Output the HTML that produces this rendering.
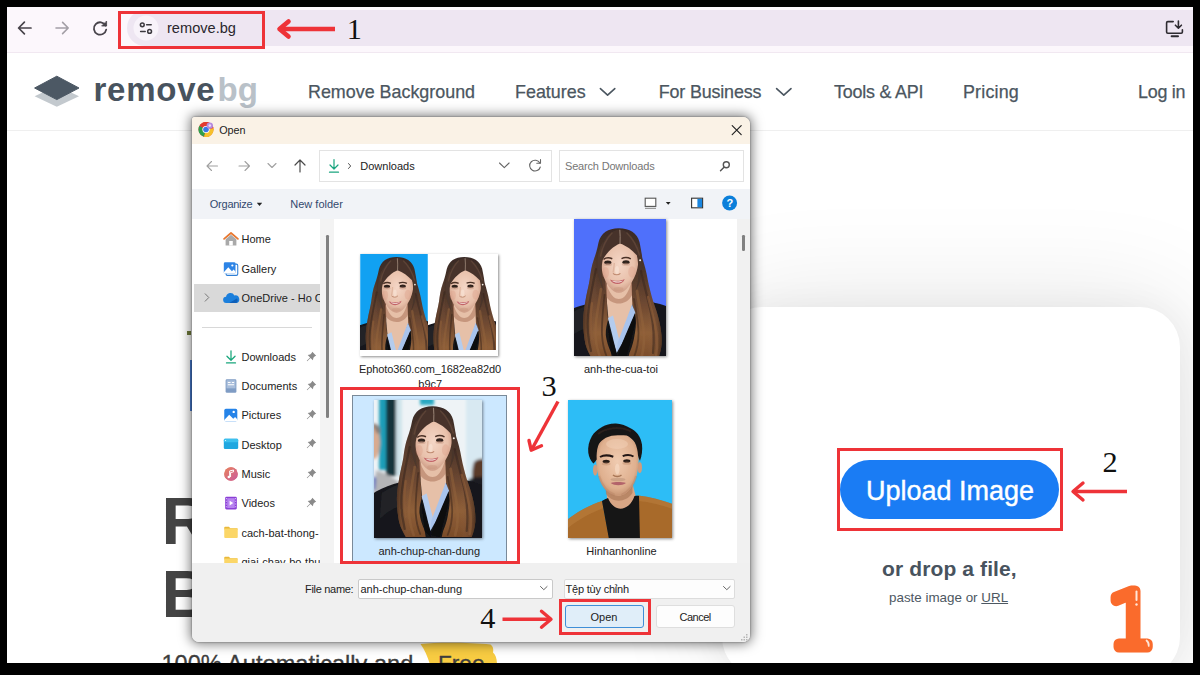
<!DOCTYPE html>
<html lang="en">
<head>
<meta charset="utf-8">
<title>remove.bg – Open file</title>
<style>
*{box-sizing:border-box;margin:0;padding:0}
html,body{width:1200px;height:675px;overflow:hidden;background:#000}
body{font-family:"Liberation Sans",sans-serif;position:relative}
.abs{position:absolute}
.t{position:absolute;white-space:nowrap;line-height:1}
#screen{position:absolute;left:7px;top:6.500px;width:1186px;height:656.500px;background:#fff;overflow:hidden}
/* coordinates inside #screen are offset by -7,-7 ; use wrapper to keep page coords */
#page{position:absolute;left:-7px;top:-6.500px;width:1200px;height:675px}
/* browser bar */
#bbar{left:7px;top:6px;width:1186px;height:46px;background:#fcf7fc}
#omni{left:127px;top:10px;width:1080px;height:36px;background:#eee6f2;border-radius:18px 0 0 18px}
#omni-strip{left:7px;top:46px;width:1186px;height:6px;background:#fcf7fc}
#bline{left:7px;top:52px;width:1186px;height:1px;background:#f1e8f1}
.nav{font-size:17.9px;color:#4b5660;-webkit-text-stroke:.25px #4b5660}
/* site */
#hline{left:7px;top:130px;width:1186px;height:1px;background:#efefef}
/* dialog */
#dlg{left:192px;top:117px;width:558px;height:525px;background:#fff;border-radius:3px 7px 7px 7px;box-shadow:0 0 12px 2px rgba(0,0,0,.5),0 0 2px rgba(0,0,0,.5)}
#dlgin{position:absolute;left:0;top:0;width:558px;height:525px;overflow:hidden;border-radius:3px 7px 7px 7px;font-size:12px;color:#1f1f1f}
#dlgc{position:absolute;left:-192px;top:-117px;width:1200px;height:675px}
.d{position:absolute;white-space:nowrap;line-height:1;font-size:11px;color:#222}
.red{position:absolute;border:3.500px solid #ee3338}
.num{position:absolute;font-family:"Liberation Serif",serif;color:#111;line-height:1;white-space:nowrap}
</style>
</head>
<body>

<svg width="0" height="0" style="position:absolute">
<defs>
  <linearGradient id="hairg" x1="0" y1="0" x2="0" y2="1">
    <stop offset="0" stop-color="#3a2b26"/><stop offset=".3" stop-color="#4a342a"/><stop offset=".55" stop-color="#6a4630"/><stop offset=".8" stop-color="#8f5f38"/><stop offset="1" stop-color="#7a4c2a"/>
  </linearGradient>
  <linearGradient id="hairhl" x1="0" y1="0" x2="1" y2="0">
    <stop offset="0" stop-color="#3a241a" stop-opacity=".7"/><stop offset=".18" stop-color="#9a6a48" stop-opacity=".0"/><stop offset=".82" stop-color="#9a6a48" stop-opacity=".0"/><stop offset="1" stop-color="#3a241a" stop-opacity=".7"/>
  </linearGradient>
  <radialGradient id="skin" cx=".5" cy=".45" r=".6">
    <stop offset="0" stop-color="#f4d6c6"/><stop offset=".65" stop-color="#e8c0aa"/><stop offset="1" stop-color="#c4907a"/>
  </radialGradient>
  <radialGradient id="skinm" cx=".5" cy=".45" r=".62">
    <stop offset="0" stop-color="#f0cbb0"/><stop offset=".7" stop-color="#dfb08f"/><stop offset="1" stop-color="#b98563"/>
  </radialGradient>
  <filter id="bl" x="-5%" y="-5%" width="110%" height="110%"><feGaussianBlur stdDeviation=".7"/></filter>
  <filter id="bl2" x="-10%" y="-10%" width="120%" height="120%"><feGaussianBlur stdDeviation="1.6"/></filter>

  <!-- woman : nominal frame 92 x 137 -->
  <g id="woman" filter="url(#bl)">
    <!-- jacket -->
    <path d="M-30 116C-24 100 -10 92 6 87 16 84 26 82 34 82H58C66 81 76 82 86 85 102 90 114 98 124 114V152H-30z" fill="#15161a"/>
    <path d="M-6 96C0 92 6 89 12 87L10 110C4 112 -2 116 -8 122z" fill="#2a2c33" opacity=".55"/>
    <!-- hair mass -->
    <path d="M44.700 9.300C34 9.300 27 14 24.500 23.500 23 31 21.500 36 20 40 17.500 47 16.500 54 15.700 60.600 14.500 68 12.500 75 11.400 82 10 90 9 97 9.200 103.500 9.400 111 10 118 11.400 125 13 131 15.500 135 18 140H84C86 135 87.200 130 87.600 125 88 118 87 110 85.500 103.500 84 96 81.500 89 79 82 77 75 75 68 73.700 60.600 72.500 53 70.500 46 68.300 39 67.500 33 66.500 28 65.500 23 63 14 56 9.300 44.700 9.300z" fill="url(#hairg)"/>
    <path d="M44.700 9.300C34 9.300 27 14 24.500 23.500 23 31 21.500 36 20 40 17.500 47 16.500 54 15.700 60.600 14.500 68 12.500 75 11.400 82 10 90 9 97 9.200 103.500 9.400 111 10 118 11.400 125 13 131 15.500 135 18 140H84C86 135 87.200 130 87.600 125 88 118 87 110 85.500 103.500 84 96 81.500 89 79 82 77 75 75 68 73.700 60.600 72.500 53 70.500 46 68.300 39 67.500 33 66.500 28 65.500 23 63 14 56 9.300 44.700 9.300z" fill="url(#hairhl)"/>
    <!-- V opening : chest, shirt, inner jacket -->
    <path d="M33.500 78L55.600 78 58.600 86.400C60.500 92 61.900 98 61.900 103.500 61.900 110 60.500 116 59.700 120.700 58.500 126 57 130 55.400 134L54 140H38L37 133.600C34.500 128 32.500 122 31.800 116 31.500 110 33 105 34 101L32.900 82z" fill="#141519"/>
    <path d="M32.500 58H57L58.400 86 44 128 34.500 101 33 84z" fill="#e6c0a8"/>
    <path d="M31 60C35 76 40.500 80 44.800 80 49.500 80 54.500 76 58 60L58 76C53 87 38 87 32.500 78z" fill="#b07a60" opacity=".6"/>
    <path d="M34 99L42.600 134 46 124 39 96.500z" fill="#b4ccee"/>
    <path d="M58 85.500L43.500 124 42.600 134 50 121 61.500 94z" fill="#a8c3ec"/>
    <path d="M33.500 104L37 134 43 140 42.600 134z" fill="#0c0d10"/>
    <path d="M61 94L49 122 43 138 52 140 61.500 104z" fill="#0c0d10"/>
    <!-- face -->
    <path d="M45 21C34 21 27 30 27 42 27.200 52 30 61 35 67.500 38 71.500 41.500 73.800 44.800 73.800 48.200 73.800 51.500 71.500 54.500 67.500 60 61 64 52 64.300 42 64.300 30 56 21 45 21z" fill="url(#skin)"/>
    <!-- hair framing face -->
    <path d="M24.500 46C24.500 24 35 11.500 45.300 10.500 56 11.500 66 24 66 46 65 41 64 38.500 63 36.500 58 31 52 26.500 46 24.600 40 27 33 33 28.800 40.600 27 42 25.500 43.500 24.500 46z" fill="#46332c"/>
    <path d="M28.800 40.600C27.500 46 27.300 54 27.800 60 28.200 64 28.800 68 30 72 25 64 22.500 52 23.500 40 24 34 26 28 29 23 28 29 28 35 28.800 40.600z" fill="#4e382d"/>
    <path d="M63 36.500C64.200 42 64.500 50 64.200 57 64 63 63 67 61.500 72 66.500 64 69 52 68 40 67.500 34 65.500 28 62.500 23 63.500 28 63.500 32 63 36.500z" fill="#4a342b"/>
    <!-- hair texture -->
    <g fill="none" stroke-linecap="round">
      <path d="M22 50C19 64 15.500 80 14 96 13 108 14 120 17 132" stroke="#35241d" stroke-width="2.200" opacity=".55"/>
      <path d="M27 70C25 84 22 98 21.500 110 21 120 23 130 26 138" stroke="#94633c" stroke-width="2.600" opacity=".5"/>
      <path d="M30.500 76C29 90 27.500 104 28 116 28.500 124 30 131 32.500 137" stroke="#3e281e" stroke-width="1.800" opacity=".6"/>
      <path d="M18 84C16.500 96 16 108 18 120" stroke="#8e5e38" stroke-width="2.200" opacity=".6"/>
      <path d="M67 52C70 66 74 80 77 94 79.500 106 80.500 120 79 134" stroke="#35241d" stroke-width="2.200" opacity=".5"/>
      <path d="M63 72C65 86 68 98 69.500 110 70.500 120 70 130 67.500 138" stroke="#94633c" stroke-width="2.800" opacity=".5"/>
      <path d="M60 80C62 92 64.500 104 64.500 114 64.500 124 62.500 132 60 138" stroke="#3e281e" stroke-width="1.800" opacity=".55"/>
      <path d="M74 78C77.500 92 82 106 83 118 83.500 126 83 132 82 137" stroke="#8e5e38" stroke-width="2.400" opacity=".6"/>
      <path d="M38 14C32 20 28.500 28 26.500 37M53 14C59 20 63 27 65.500 36" stroke="#6a4c3c" stroke-width="1.500" opacity=".6"/>
    </g>
    <path d="M45.800 10.800C46.200 15 46.300 20 46 24.600" stroke="#a89080" stroke-width="1" fill="none" opacity=".85"/>
    <!-- features -->
    <path d="M29.500 40.300C32 38.600 35.500 38.600 38.300 39.800M47.500 39.600C50.200 38.400 54 38.400 56.800 39.900" stroke="#4a3026" stroke-width="1.500" fill="none"/>
    <ellipse cx="33.800" cy="43.500" rx="3.600" ry="2" fill="#2e201c"/>
    <ellipse cx="52" cy="43.300" rx="3.600" ry="2" fill="#2e201c"/>
    <ellipse cx="33.800" cy="45.500" rx="4.200" ry="1.500" fill="#c99a84" opacity=".5"/>
    <ellipse cx="52" cy="45.300" rx="4.200" ry="1.500" fill="#c99a84" opacity=".5"/>
    <path d="M39 54.300C40.800 56.300 44.600 56.300 46.400 54.300" stroke="#b98368" stroke-width="1.100" fill="none" opacity=".9"/>
    <path d="M40.300 44C40 48 39.600 51.500 39 53.500" stroke="#d3a48b" stroke-width="1.400" fill="none" opacity=".55"/>
    <ellipse cx="43" cy="51" rx="2" ry="4" fill="#f8e2d4" opacity=".7"/>
    <path d="M35.900 60.500C40 62.300 47 62.300 50.700 60 48.800 66.400 39 66.800 35.900 60.500z" fill="#c26468"/>
    <path d="M38 61.700C41.500 62.800 46 62.800 49 61.400 47 64 40.500 64.200 38 61.700z" fill="#f6ece6"/>
    <ellipse cx="31.500" cy="53.500" rx="3.500" ry="5.500" fill="#d99884" opacity=".32"/>
    <ellipse cx="58" cy="53" rx="3.800" ry="5.800" fill="#d99884" opacity=".32"/>
    <ellipse cx="44.500" cy="70" rx="5" ry="2" fill="#c48f76" opacity=".35"/>
    <circle cx="66.100" cy="41.200" r="1" fill="#f4efe8"/>
  </g>

  <!-- man : nominal frame 104 x 138 -->
  <g id="man" filter="url(#bl)">
    <!-- cardigan -->
    <path d="M-4 123C6 113 20 106 34 101L42 142H70L70 95.500C82 97 94 100 108 105V144H-4z" fill="#a86a2b"/>
    <path d="M-4 123C6 113 20 106 34 101L35.500 108C22 113 8 121 -4 131z" fill="#bb7f3e" opacity=".55"/>
    <path d="M70 95.500C82 97 94 100 108 105V110C94 105 82 102 70 101z" fill="#bb7f3e" opacity=".5"/>
    <path d="M34 101L42 142H46L37.500 101z" fill="#8a5420" opacity=".7"/>
    <path d="M70 95.500L70 142H66.500L67 97z" fill="#8a5420" opacity=".6"/>
    <!-- neck -->
    <path d="M38 84H64.500L68 97C64 118 44 118 39 98z" fill="#d8a685"/>
    <path d="M37.500 86C44 99 58 99 64.500 85V93C58 103 44 103 38 94z" fill="#a97656" opacity=".65"/>
    <!-- t-shirt -->
    <path d="M34 101C36 99.500 38 98.500 40 98 46 113 61 112 66.500 96 68 95.500 69.500 95.500 71 96L72 142H41.500z" fill="#131315"/>
    <!-- ears -->
    <ellipse cx="27.200" cy="70" rx="2.200" ry="5.600" fill="#d29c7c"/>
    <ellipse cx="71.800" cy="67.500" rx="2.200" ry="5.600" fill="#d29c7c"/>
    <!-- face -->
    <path d="M49 33C37 33 28 41 28 56 28 66 29.500 76 33.500 84 37.500 91.500 43.500 95.600 49.800 95.600 56 95.600 62 91 65.800 83.500 69.500 76 70.700 66 70.700 56 70.700 41 61 33 49 33z" fill="url(#skinm)"/>
    <!-- hair -->
    <path d="M25.300 63.500C26.500 62.500 27.800 61 28.700 59.500 28.400 55 28.800 50 30 46.200 31 43 33 41 35.300 39.500 38.500 37 42.500 35.700 46.700 35.500 50.500 35 55 35 58.700 35.500 62 37 64.800 39.500 66.700 42.200 68.800 46 69.800 51 70 55.500 70.500 57.500 71.200 59.500 72 60.800 73.800 56 74.600 50 74 44.800 73 37 68.500 31 62 28 57.500 25.300 52.500 23.700 48 23.500 43 23.300 38 24.500 34 27 29.500 29.500 26 32.500 24 36 21 41 19.700 47 20.300 52.800 20.800 57 22.800 61 25.300 63.500z" fill="#181313"/>
    <path d="M30 34C38 27.500 52 26 63 31.500" stroke="#3a2c28" stroke-width="2" fill="none" opacity=".55"/>
    <!-- brows/eyes -->
    <path d="M32 57C35.500 55 40.500 55 45.300 56.700M54.700 56.200C58 54.700 62.500 54.700 65.500 56.500" stroke="#241814" stroke-width="2" fill="none"/>
    <ellipse cx="38.200" cy="61.600" rx="3.600" ry="1.800" fill="#281c18"/>
    <ellipse cx="58.800" cy="61" rx="3.600" ry="1.800" fill="#281c18"/>
    <ellipse cx="38.200" cy="63.800" rx="4.400" ry="1.600" fill="#b98563" opacity=".4"/>
    <ellipse cx="58.800" cy="63.200" rx="4.400" ry="1.600" fill="#b98563" opacity=".4"/>
    <path d="M45 75C47 77 51.500 77 53.500 75" stroke="#a87656" stroke-width="1.300" fill="none"/>
    <ellipse cx="49.300" cy="69" rx="2.300" ry="5.500" fill="#f8dcc6" opacity=".65"/>
    <ellipse cx="49" cy="44" rx="11" ry="5" fill="#f8dcc6" opacity=".35"/>
    <path d="M42.700 83C46.500 81.600 54 81.600 58 83 54 86 46.500 86 42.700 83z" fill="#b3646a"/>
    <ellipse cx="50" cy="79.500" rx="7.500" ry="1.700" fill="#7a5a48" opacity=".22"/>
    <path d="M31 76C33.500 85 39.500 92.500 46.500 95" stroke="#b07c5c" stroke-width="2.400" fill="none" opacity=".3"/>
    <path d="M68.200 76C66 85 60.500 92 53.500 95" stroke="#b07c5c" stroke-width="2.400" fill="none" opacity=".3"/>
  </g>
</defs>
</svg>
<div id="screen"><div id="page">

<!-- ===== browser toolbar ===== -->
<div class="abs" id="bbar"></div>
<div class="abs" id="omni-strip"></div>
<div class="abs" id="omni"></div>
<div class="abs" id="bline"></div>

<svg class="abs" style="left:7px;top:7px" width="1186" height="46" viewBox="7 7 1186 46" fill="none" stroke-linecap="round" stroke-linejoin="round">
  <!-- back -->
  <path d="M31 28H18.6M24.4 22.2L18.6 28l5.8 5.8" stroke="#47434a" stroke-width="1.7"/>
  <!-- forward -->
  <path d="M56 28h12.2M62.6 22.4L68.2 28l-5.6 5.6" stroke="#a39fa6" stroke-width="1.6"/>
  <!-- reload -->
  <path d="M105.6 25.6A6.2 6.2 0 1 0 106.2 29.6" stroke="#47434a" stroke-width="1.8"/>
  <path d="M106.6 21.4v4.6h-4.6z" fill="#47434a" stroke="#47434a" stroke-width="0.8"/>
  <!-- site info chip -->
  <circle cx="146" cy="28" r="12.5" fill="#f8f3fa" stroke="none"/>
  <g stroke="#3d3a40" stroke-width="1.5">
    <circle cx="142.3" cy="24.8" r="1.9"/>
    <path d="M146.6 24.8h4.6"/>
    <path d="M140.6 31.4h4.6"/>
    <circle cx="149.6" cy="31.4" r="1.9"/>
  </g>
  <!-- install icon -->
  <g stroke="#2e2b31" stroke-width="1.6">
    <path d="M1173.2 21.6h-5.4a1.2 1.2 0 0 0-1.2 1.2v9.2a1.2 1.2 0 0 0 1.2 1.2h13.4a1.2 1.2 0 0 0 1.2-1.2v-2.2"/>
    <path d="M1171.6 36.2h6.4" stroke-width="2"/>
    <path d="M1178.4 21v6.6M1175.4 25.2l3 3 3-3"/>
  </g>
</svg>
<div class="t" style="left:167px;top:21px;font-size:14.6px;color:#2a272d">remove.bg</div>


<!-- ===== site header ===== -->

<svg class="abs" style="left:30px;top:70px" width="56" height="44" viewBox="30 70 56 44">
  <path d="M34.6 96.2L56.8 85.8 79 96.2 56.8 106.8z" fill="#c3c9ce"/>
  <path d="M34.6 88L56.8 76.2 79 88 56.8 99.6z" fill="#4c5864" stroke="#4c5864" stroke-width="1" stroke-linejoin="round"/>
</svg>
<div class="t" id="lg1" style="left:93.500px;top:72.800px;font-size:33px;font-weight:bold;color:#48535e;letter-spacing:0.75px">remove</div>
<div class="t" id="lg2" style="left:217.500px;top:72.800px;font-size:33px;font-weight:bold;color:#b9c1c8">bg</div>
<div class="t nav" id="n1" style="top:83.900px;left:308px">Remove Background</div>
<div class="t nav" id="n2" style="top:83.900px;left:515px">Features</div>
<div class="t nav" id="n3" style="letter-spacing:-.15px;top:83.900px;left:658.700px">For Business</div>
<div class="t nav" id="n4" style="letter-spacing:-.2px;top:83.900px;left:834px">Tools &amp; API</div>
<div class="t nav" id="n5" style="letter-spacing:.17px;top:83.900px;left:963px">Pricing</div>
<div class="t nav" id="n6" style="letter-spacing:-.25px;top:83.900px;left:1138px">Log in</div>
<svg class="abs" style="left:596px;top:84px" width="200" height="16" viewBox="596 84 200 16" fill="none" stroke="#4b5660" stroke-width="1.6" stroke-linecap="round" stroke-linejoin="round">
  <path d="M600.4 88.6l7.2 6.6 7.2-6.6"/>
  <path d="M776.6 88.6l7.2 6.6 7.2-6.6"/>
</svg>

<div class="abs" id="hline"></div>

<!-- ===== page body ===== -->

<div class="abs" id="card" style="left:722px;top:307px;width:458px;height:370px;background:#fff;border-radius:40px;box-shadow:0 0 110px 4px rgba(0,0,0,.105),0 0 36px 0 rgba(0,0,0,.05)"></div>
<div class="abs" id="upbtn" style="left:840px;top:460px;width:219px;height:59px;border-radius:30px;background:#1a7cf4"></div>
<div class="t" id="uptx" style="left:866px;top:478px;font-size:27px;color:#fff;-webkit-text-stroke:0.4px #fff">Upload Image</div>
<div class="t" id="drop" style="left:882px;top:558px;font-size:21px;font-weight:bold;color:#48535e;letter-spacing:.12px">or drop a file,</div>
<div class="t" id="paste" style="left:889px;top:591px;font-size:13.4px;color:#4d5862">paste image or <span style="text-decoration:underline">URL</span></div>
<div class="t" id="bigR" style="left:161.500px;top:487px;font-size:67px;font-weight:bold;color:#444">R</div>
<div class="t" id="bigB" style="left:161.500px;top:560px;font-size:67px;font-weight:bold;color:#444">B</div>
<svg class="abs" style="left:415px;top:640px" width="90" height="30" viewBox="415 640 90 30"><path d="M420.500 644c18-2 50-1.500 70 0.500 3 2 3 5 2.500 8 2.500 2 4 6 4 12H430c-2-7-5-14-9.500-20.500z" fill="#f8cc42"/></svg>
<div class="t" id="auto" style="left:161.500px;top:652.500px;font-size:23.6px;color:#3d3d3d;-webkit-text-stroke:0.3px #3d3d3d">100% Automatically and</div>
<div class="t" id="free" style="left:438px;top:652.500px;font-size:22.6px;color:#3d3d3d;-webkit-text-stroke:0.3px #3d3d3d">Free</div>


<div class="abs" style="left:190.300px;top:360px;width:1.800px;height:51px;background:#4a7fd6"></div>
<div class="abs" style="left:187px;top:331px;width:4px;height:4px;background:#6f7a3a"></div>
<!-- ===== dialog ===== -->
<div class="abs" id="dlg"><div id="dlgin"><div id="dlgc">

<!-- title bar -->
<div class="abs" style="left:192px;top:117px;width:558px;height:27px;background:#faf2e6"></div>
<svg class="abs" style="left:198px;top:121px" width="17" height="17" viewBox="0 0 17 17">
  <circle cx="8" cy="8.500" r="7.500" fill="#e33b2e"/>
  <path d="M8 8.500L1.500 4.800A7.500 7.500 0 0 0 6 15.800z" fill="#2e9f4d"/>
  <path d="M8 8.500L6 15.800A7.500 7.500 0 0 0 15.400 7z" fill="#f6c02c"/>
  <path d="M8 8.500L15.400 7A7.500 7.500 0 0 0 1.500 4.800z" fill="#e33b2e"/>
  <circle cx="8" cy="8.500" r="3.600" fill="#fff"/><circle cx="8" cy="8.500" r="2.800" fill="#3b78e7"/>
  <circle cx="11.800" cy="4.600" r="3.200" fill="#b58be0"/><circle cx="11.800" cy="4.600" r="1.300" fill="#e9d9f7"/>
</svg>
<div class="d" id="dttl" style="left:219.200px;top:125.200px;font-size:10.800px">Open</div>
<svg class="abs" style="left:730px;top:123px" width="14" height="14" viewBox="0 0 14 14"><path d="M2.200 2.600l9 9M11.200 2.600l-9 9" stroke="#222" stroke-width="1.200" stroke-linecap="round"/></svg>

<!-- nav row -->
<svg class="abs" style="left:200px;top:155px" width="112" height="22" viewBox="200 155 112 22" fill="none" stroke-linecap="round" stroke-linejoin="round">
  <path d="M217.500 166h-10.500M211.500 161.500L207 166l4.500 4.500" stroke="#a0a0a0" stroke-width="1.100"/>
  <path d="M239 166h10.500M245 161.500l4.500 4.500-4.500 4.500" stroke="#a0a0a0" stroke-width="1.100"/>
  <path d="M268 163.500l4 4 4-4" stroke="#a0a0a0" stroke-width="1.100"/>
  <path d="M300 172v-11.500M295 165l5-5 5 5" stroke="#4a4a4a" stroke-width="1.200"/>
</svg>
<div class="abs" style="left:319px;top:150px;width:232.500px;height:32px;border:1px solid #e3e3e3;background:#fff"></div>
<svg class="abs" style="left:326px;top:157px" width="30" height="18" viewBox="326 157 30 18" fill="none" stroke-linecap="round" stroke-linejoin="round">
  <path d="M334 159.500v9M330 165l4 4 4-4" stroke="#1aa57f" stroke-width="1.200"/>
  <path d="M329.500 172.200h9" stroke="#1aa57f" stroke-width="1.200"/>
  <path d="M348.500 163.500l2.200 2.500-2.200 2.500" stroke="#555" stroke-width="1"/>
</svg>
<div class="d" id="daddr" style="left:360.300px;top:160.500px">Downloads</div>
<svg class="abs" style="left:496px;top:157px" width="48" height="18" viewBox="496 157 48 18" fill="none" stroke="#666" stroke-width="1.100" stroke-linecap="round" stroke-linejoin="round">
  <path d="M499.500 163l4.800 4.600 4.800-4.600"/>
  <path d="M539.800 163A5.400 5.400 0 1 0 540.300 167"/>
  <path d="M540.500 159.500v3.700h-3.700"/>
</svg>
<div class="abs" style="left:558.500px;top:150px;width:185.500px;height:32px;border:1px solid #e3e3e3;background:#fff"></div>
<div class="d" id="dsearch" style="left:565px;top:161px;color:#767676;letter-spacing:-.18px">Search Downloads</div>
<svg class="abs" style="left:718px;top:159px" width="14" height="14" viewBox="0 0 14 14" fill="none" stroke="#555" stroke-width="1.400" stroke-linecap="round"><circle cx="8.300" cy="5.700" r="3"/><path d="M6 8.200L2.500 11.800"/></svg>

<!-- toolbar row -->
<div class="abs" style="left:192px;top:189px;width:558px;height:29.500px;background:#f1f3f7"></div>
<div class="d" id="dorg" style="left:209.800px;top:198.700px;color:#33496e;letter-spacing:-.25px">Organize</div>
<svg class="abs" style="left:255.500px;top:201.500px" width="7" height="5" viewBox="0 0 7 5"><path d="M.8.800h5.400L3.500 4z" fill="#222"/></svg>
<div class="d" id="dnew" style="left:290.300px;top:198.700px;color:#33496e">New folder</div>
<svg class="abs" style="left:640px;top:194px" width="100" height="18" viewBox="640 194 100 18">
  <rect x="645.200" y="198.200" width="10.600" height="8.200" fill="#fff" stroke="#555" stroke-width="1.100"/>
  <path d="M645 208.300h11" stroke="#999" stroke-width="1.200"/>
  <path d="M665.800 202h4.800l-2.400 2.800z" fill="#222"/>
  <rect x="691.600" y="198.200" width="11" height="9.600" fill="#fff" stroke="#333" stroke-width="1.100"/>
  <rect x="697.400" y="198.800" width="4.700" height="8.400" fill="#1a86e0"/>
  <circle cx="729.600" cy="203" r="7.500" fill="#0c7fda"/>
</svg>
<div class="d" style="left:726.600px;top:197.500px;color:#fff;font-weight:bold;font-size:11px">?</div>

<!-- sidebar -->
<div class="abs" style="left:320px;top:218.500px;width:14px;height:345px;background:#f3f3f3"></div>
<div class="abs" style="left:326.400px;top:235px;width:2.600px;height:182.500px;background:#808080;border-radius:1.300px"></div>
<div class="abs" style="left:194px;top:283.500px;width:125.500px;height:28.500px;background:#d9d9d9"></div>
<svg class="abs" style="left:203px;top:292px" width="8" height="11" viewBox="0 0 8 11"><path d="M2.200 1.800l3.600 3.700-3.600 3.700" fill="none" stroke="#777" stroke-width="1" stroke-linecap="round" stroke-linejoin="round"/></svg>
<div class="abs" style="left:202px;top:326.500px;width:110px;height:1px;background:#d8d8d8"></div>
<div class="abs" id="sbclip" style="left:192px;top:218.500px;width:127.500px;height:344.500px;overflow:hidden"><div class="abs" style="left:-192px;top:-218.500px;width:400px;height:700px">
<svg width="0" height="0" style="position:absolute"><defs><linearGradient id="mg" x1="0" y1="0" x2="1" y2="1"><stop offset="0" stop-color="#e9835a"/><stop offset="1" stop-color="#c95aa0"/></linearGradient></defs></svg>
<div class="d sb" id="sb0" style="left:241.5px;top:234.3px">Home</div>
<svg class="abs" style="left:222px;top:231.2px" width="18" height="16.200" viewBox="0 0 20 18"><path d="M2.300 8.800L10 2.200l7.700 6.600" fill="none" stroke="#e8772e" stroke-width="2" stroke-linecap="round" stroke-linejoin="round"/><path d="M4 9.200L10 4.200l6 5V16H4z" fill="#a9a9a9"/><path d="M8 11h4v5H8z" fill="#fff"/></svg>
<div class="d sb" id="sb1" style="left:241.5px;top:263.7px">Gallery</div>
<svg class="abs" style="left:222px;top:260.6px" width="18" height="16.200" viewBox="0 0 20 18"><rect x="4.500" y="3.500" width="13" height="12.500" rx="1.500" fill="none" stroke="#2f7fd6" stroke-width="1.200"/><rect x="2" y="1.500" width="13" height="12.500" rx="1.500" fill="#2d84e6"/><path d="M2 12.500l5-5.500 4 4.500 2-2 2 2.500V14H2z" fill="#fff"/><circle cx="11.500" cy="5" r="1.200" fill="#fff"/></svg>
<div class="d sb" id="sb2" style="left:241.5px;top:292.9px">OneDrive - Ho Chi Minh</div>
<svg class="abs" style="left:222px;top:289.8px" width="18" height="16.200" viewBox="0 0 20 18"><path d="M5 14.500a3.500 3.500 0 0 1-.5-7A5 5 0 0 1 13.800 6a4 4 0 0 1 2 8.500z" fill="#1b7fdc"/><path d="M8 14.500l8.500-5a3.300 3.300 0 0 1-.7 5z" fill="#0f5fb8"/></svg>
<div class="d sb" id="sb3" style="left:241.5px;top:351.7px">Downloads</div>
<svg class="abs" style="left:222px;top:348.6px" width="18" height="16.200" viewBox="0 0 20 18"><path d="M10 2v10M5.500 8L10 12.500 14.500 8" fill="none" stroke="#18a67c" stroke-width="1.400" stroke-linecap="round" stroke-linejoin="round"/><path d="M5 15.500h10" stroke="#18a67c" stroke-width="1.400" stroke-linecap="round"/></svg>
<svg class="abs" style="left:306px;top:350.6px" width="11" height="11" viewBox="0 0 11 11"><path d="M6.300 0.800L10.200 4.700 8.900 5.300 7.400 6.800 6.900 9.300 4.500 6.900 1.200 10.200 0.800 9.800 4.100 6.500 1.700 4.100 4.200 3.600 5.700 2.100z" fill="#8a8a8a"/></svg>
<div class="d sb" id="sb4" style="left:241.5px;top:381.1px">Documents</div>
<svg class="abs" style="left:222px;top:378.0px" width="18" height="16.200" viewBox="0 0 20 18"><rect x="4" y="1.500" width="12" height="15" rx="1.500" fill="#7f9cc4"/><rect x="5" y="2.500" width="10" height="9" fill="#a9bedb"/><path d="M6.500 5h3M6.500 7.500h7M11 5h2.500" stroke="#fff" stroke-width="1.100"/></svg>
<svg class="abs" style="left:306px;top:380px" width="11" height="11" viewBox="0 0 11 11"><path d="M6.300 0.800L10.200 4.700 8.900 5.300 7.400 6.800 6.900 9.300 4.500 6.900 1.200 10.200 0.800 9.800 4.100 6.500 1.700 4.100 4.200 3.600 5.700 2.100z" fill="#8a8a8a"/></svg>
<div class="d sb" id="sb5" style="left:241.5px;top:410.1px">Pictures</div>
<svg class="abs" style="left:222px;top:407.0px" width="18" height="16.200" viewBox="0 0 20 18"><rect x="2.500" y="2" width="14.500" height="14" rx="1.800" fill="#2583e8"/><path d="M2.500 14.500l5.500-6 4.500 4.500 2-2 2.500 2.500V16H2.500z" fill="#fff"/><circle cx="13" cy="5.500" r="1.300" fill="#fff"/></svg>
<svg class="abs" style="left:306px;top:409px" width="11" height="11" viewBox="0 0 11 11"><path d="M6.300 0.800L10.200 4.700 8.900 5.300 7.400 6.800 6.900 9.300 4.500 6.900 1.200 10.200 0.800 9.800 4.100 6.500 1.700 4.100 4.200 3.600 5.700 2.100z" fill="#8a8a8a"/></svg>
<div class="d sb" id="sb6" style="left:241.5px;top:439.5px">Desktop</div>
<svg class="abs" style="left:222px;top:436.4px" width="18" height="16.200" viewBox="0 0 20 18"><rect x="2" y="3" width="16" height="11.500" rx="1.500" fill="#1fa7e0"/><rect x="2" y="3" width="16" height="4" rx="1.500" fill="#3cc0ee"/><circle cx="4" cy="5" r=".6" fill="#fff"/></svg>
<svg class="abs" style="left:306px;top:438.4px" width="11" height="11" viewBox="0 0 11 11"><path d="M6.300 0.800L10.200 4.700 8.900 5.300 7.400 6.800 6.900 9.300 4.500 6.900 1.200 10.200 0.800 9.800 4.100 6.500 1.700 4.100 4.200 3.600 5.700 2.100z" fill="#8a8a8a"/></svg>
<div class="d sb" id="sb7" style="left:241.5px;top:468.8px">Music</div>
<svg class="abs" style="left:222px;top:465.7px" width="18" height="16.200" viewBox="0 0 20 18"><circle cx="10" cy="9" r="7.500" fill="#e0706a"/><circle cx="10" cy="9" r="7.500" fill="url(#mg)"/><path d="M8.500 12.300V5.500l4.300-1v2l-3.300.8v5" fill="none" stroke="#fff" stroke-width="1.100"/><circle cx="7.600" cy="12.300" r="1.400" fill="#fff"/></svg>
<svg class="abs" style="left:306px;top:467.7px" width="11" height="11" viewBox="0 0 11 11"><path d="M6.300 0.800L10.200 4.700 8.900 5.300 7.400 6.800 6.900 9.300 4.500 6.900 1.200 10.200 0.800 9.800 4.100 6.500 1.700 4.100 4.200 3.600 5.700 2.100z" fill="#8a8a8a"/></svg>
<div class="d sb" id="sb8" style="left:241.5px;top:498.1px">Videos</div>
<svg class="abs" style="left:222px;top:495.0px" width="18" height="16.200" viewBox="0 0 20 18"><rect x="3.500" y="2" width="13" height="14" rx="1.500" fill="#8a3fd6"/><rect x="5.800" y="3.500" width="8.400" height="11" fill="#b884f0"/><path d="M8.500 6.300l4 2.700-4 2.700z" fill="#fff"/><path d="M4.300 4h1M4.300 7h1M4.300 10h1M4.300 13h1M14.700 4h1M14.700 7h1M14.700 10h1M14.700 13h1" stroke="#e9d7fb" stroke-width="1.200"/></svg>
<svg class="abs" style="left:306px;top:497px" width="11" height="11" viewBox="0 0 11 11"><path d="M6.300 0.800L10.200 4.700 8.900 5.300 7.400 6.800 6.900 9.300 4.500 6.900 1.200 10.200 0.800 9.800 4.100 6.500 1.700 4.100 4.200 3.600 5.700 2.100z" fill="#8a8a8a"/></svg>
<div class="d sb" id="sb9" style="left:241.5px;top:527.5px">cach-bat-thong-</div>
<svg class="abs" style="left:222px;top:524.4px" width="18" height="16.200" viewBox="0 0 20 18"><path d="M2.500 4a1 1 0 0 1 1-1h4.200l1.500 1.600h7.300a1 1 0 0 1 1 1V6H2.500z" fill="#e9b93a"/><rect x="2.500" y="5" width="15" height="10.500" rx="1" fill="#fbd667"/></svg>
<div class="d sb" id="sb10" style="left:241.5px;top:556.6px">giai-chay-bo-thu</div>
<svg class="abs" style="left:222px;top:553.5px" width="18" height="16.200" viewBox="0 0 20 18"><path d="M2.500 4a1 1 0 0 1 1-1h4.200l1.500 1.600h7.300a1 1 0 0 1 1 1V6H2.500z" fill="#e9b93a"/><rect x="2.500" y="5" width="15" height="10.500" rx="1" fill="#fbd667"/></svg>
</div></div>

<!-- main scrollbar -->
<div class="abs" style="left:737px;top:218.500px;width:13px;height:345px;background:#f1f1f1"></div>
<div class="abs" style="left:742px;top:235px;width:2.600px;height:15.500px;background:#808080;border-radius:1.300px"></div>


<!-- file 1 : Ephoto360 -->
<div class="abs" style="left:359.500px;top:254px;width:138.500px;height:101.500px;background:#fff;box-shadow:1px 1px 2.500px rgba(0,0,0,.45)"></div>
<svg class="abs" style="left:359.500px;top:254px" width="68" height="95.500" viewBox="0 0 67.500 95.500"><rect width="67.500" height="95.500" fill="#11a1f2"/><g transform="translate(-2.500,-5.100) scale(.865)"><use href="#woman"/></g></svg>
<svg class="abs" style="left:428px;top:254px" width="67.500" height="95.500" viewBox="0 0 67.500 95.500"><rect width="67.500" height="95.500" fill="#fff"/><g transform="translate(-2.500,-5.100) scale(.865)"><use href="#woman"/></g></svg>
<div class="abs" id="f1clip" style="left:340px;top:360px;width:180px;height:27px;overflow:hidden">
  <div class="d" id="f1a" style="left:19px;top:3.500px;width:141.500px;text-align:center;letter-spacing:-.1px">Ephoto360.com_1682ea82d0</div>
  <div class="d" id="f1b" style="left:19.500px;top:19.300px;width:141.500px;text-align:center">b9c7</div>
</div>

<!-- file 2 : anh-the-cua-toi -->
<svg class="abs" style="left:574px;top:218.500px;filter:drop-shadow(1px 1px 1.500px rgba(0,0,0,.45))" width="92" height="137" viewBox="0 0 92 137"><rect width="92" height="137" fill="#4f70fb"/><use href="#woman"/></svg>
<div class="d" id="f2" style="left:560px;top:363.500px;width:122px;text-align:center">anh-the-cua-toi</div>

<!-- file 3 : selected -->
<div class="abs" style="left:351.500px;top:395px;width:155.500px;height:170px;background:#cce8ff;border:1px solid #7a8a99"></div>
<svg class="abs" style="left:373.500px;top:399.500px;filter:drop-shadow(1px 1px 1.500px rgba(0,0,0,.45))" width="108.500" height="138" viewBox="0 0 108.500 138">
  <rect width="108.500" height="138" fill="#eef3f6"/>
  <g filter="url(#bl2)">
    <rect x="5" y="-4" width="8.500" height="74" fill="#1c9db8"/>
    <rect x="12" y="-4" width="10" height="80" fill="#12343c"/>
    <rect x="46" y="-4" width="14" height="9" fill="#2aa9c2"/>
    <rect x="92" y="-4" width="20" height="84" fill="#d8e9f2"/>
    <rect x="22" y="-4" width="6" height="80" fill="#cfe3ea"/>
    <!-- left man -->
    <ellipse cx="0" cy="42" rx="6" ry="17" fill="#d9ab90"/>
    <path d="M-2 24C2 22 6 26 6.500 32L3 34z" fill="#8a7f78"/>
    <path d="M-4 70C6 70 18 76 27 84L24 104H-4z" fill="#b4b4b6"/>
    <path d="M-4 66L2 70 0 92-4 92z" fill="#e9edf4"/>
    <path d="M-1 76L2 78 1 90-1 90z" fill="#4560c0"/>
    <!-- right person -->
    <path d="M100 62C104 58 110 58 112 60V82H98C98 74 98 68 100 62z" fill="#5a3a2a"/>
    <path d="M94 80C100 76 108 76 114 78V142H94z" fill="#1b1c20"/>
  </g>
  <g transform="translate(13.700,-3)"><use href="#woman"/></g>
</svg>
<div class="d" id="f3" style="left:351.500px;top:546.200px;width:155.500px;text-align:center">anh-chup-chan-dung</div>

<!-- file 4 : man -->
<svg class="abs" style="left:568px;top:399.500px;filter:drop-shadow(1px 1px 1.500px rgba(0,0,0,.45))" width="104" height="138" viewBox="0 0 104 138"><rect width="104" height="138" fill="#2dbdf6"/><use href="#man"/></svg>
<div class="d" id="f4" style="left:560.500px;top:546.200px;width:122px;text-align:center">Hinhanhonline</div>


<!-- bottom panel -->
<div class="abs" style="left:192px;top:563px;width:558px;height:80px;background:#f0f0f0"></div>
<div class="d" id="dfn" style="left:305px;top:584.200px;letter-spacing:-.3px">File name:</div>
<div class="abs" style="left:358px;top:578.500px;width:194.500px;height:20px;border:1px solid #c9c9c9;background:#fff;border-radius:2px"></div>
<div class="d" id="dfv" style="left:360.500px;top:584.200px">anh-chup-chan-dung</div>
<svg class="abs" style="left:539px;top:585px" width="10" height="7" viewBox="0 0 10 7"><path d="M1.500 1.500l3.300 3.200 3.300-3.200" fill="none" stroke="#666" stroke-width="1" stroke-linecap="round" stroke-linejoin="round"/></svg>
<div class="abs" style="left:563.500px;top:578.500px;width:171.500px;height:20px;border:1px solid #dcdcdc;background:#fdfdfd;border-radius:2px"></div>
<div class="d" id="dft" style="left:565.500px;top:584.200px;letter-spacing:-.2px">Tệp tùy chỉnh</div>
<svg class="abs" style="left:722px;top:585px" width="10" height="7" viewBox="0 0 10 7"><path d="M1.500 1.500l3.300 3.200 3.300-3.200" fill="none" stroke="#666" stroke-width="1" stroke-linecap="round" stroke-linejoin="round"/></svg>
<div class="abs" style="left:564.500px;top:605px;width:79px;height:22.500px;border:1px solid #3f8fd8;background:#e0eef9;border-radius:3px"></div>
<div class="d" id="dopen" style="left:590.500px;top:611.500px">Open</div>
<div class="abs" style="left:656px;top:605px;width:78.500px;height:22.500px;border:1px solid #dedede;background:#fdfdfd;border-radius:3px"></div>
<div class="d" id="dcancel" style="left:679.500px;top:611.500px;letter-spacing:-.5px">Cancel</div>
<svg class="abs" style="left:740px;top:633px" width="9" height="9" viewBox="0 0 9 9" fill="#b5b5b5"><rect x="6" y="6" width="1.500" height="1.500"/><rect x="3.500" y="6" width="1.500" height="1.500"/><rect x="6" y="3.500" width="1.500" height="1.500"/><rect x="1" y="6" width="1.500" height="1.500"/><rect x="3.500" y="3.500" width="1.500" height="1.500"/><rect x="6" y="1" width="1.500" height="1.500"/></svg>

</div></div></div>

<!-- ===== annotations ===== -->

<div class="red" style="left:118px;top:11px;width:146.500px;height:37.500px"></div>
<div class="red" style="left:339.500px;top:387px;width:180px;height:177px"></div>
<div class="red" style="left:559px;top:598.500px;width:92.200px;height:36px"></div>
<div class="red" style="left:836.800px;top:447.800px;width:226.300px;height:83px"></div>
<svg class="abs" style="left:0;top:0;pointer-events:none" width="1200" height="675" viewBox="0 0 1200 675" fill="none" stroke="#ee3338" stroke-linecap="round" stroke-linejoin="round">
  <!-- arrow 1 -->
  <path d="M335 29H280" stroke-width="4.600" stroke-linecap="butt"/>
  <path d="M288.500 21.500L279.500 29l9 7.500" stroke-width="4.600"/>
  <!-- arrow 2 -->
  <path d="M1127 491.500H1074" stroke-width="3.400" stroke-linecap="butt"/>
  <path d="M1083 483L1073 491.500l10 8.500" stroke-width="3.400"/>
  <!-- arrow 3 -->
  <path d="M558 401.500L532 449" stroke-width="3.400" stroke-linecap="butt"/>
  <path d="M529 440.500L531.200 450.200 541.500 445.800" stroke-width="3.400"/>
  <!-- arrow 4 -->
  <path d="M502.500 619.200H550" stroke-width="3.400" stroke-linecap="butt"/>
  <path d="M541.500 611.200L551 619.200l-9.500 8" stroke-width="3.400"/>
</svg>
<div class="num" id="num1" style="left:346.800px;top:13.800px;font-size:30.300px">1</div>
<div class="num" id="num2" style="left:1102.500px;top:447.300px;font-size:30.300px">2</div>
<div class="num" id="num3" style="left:541.500px;top:370.800px;font-size:30.300px">3</div>
<div class="num" id="num4" style="left:480.300px;top:603.200px;font-size:30.300px">4</div>
<svg class="abs" style="left:1100px;top:575px" width="62" height="86" viewBox="1100 575 62 86">
  <g transform="translate(1132 647)"><text x="0" y="0" text-anchor="middle" font-family="DejaVu Sans Light, DejaVu Sans, sans-serif" font-weight="200" font-size="76" fill="#fa6b2c" stroke="#fa6b2c" stroke-width="11" stroke-linejoin="round" stroke-linecap="round" id="big1">1</text></g>
  <path d="M1136.500 591.500v8.500" stroke="#ffe6d8" stroke-width="2" stroke-linecap="round"/>
  <circle cx="1136.500" cy="604.500" r="1.200" fill="#ffe6d8"/>
  <path d="M1146.500 640.500c1.800 1.500 2.500 3.500 2.200 5.500" stroke="#ffe6d8" stroke-width="1.700" stroke-linecap="round" fill="none"/>
</svg>


</div></div>
</body>
</html>
